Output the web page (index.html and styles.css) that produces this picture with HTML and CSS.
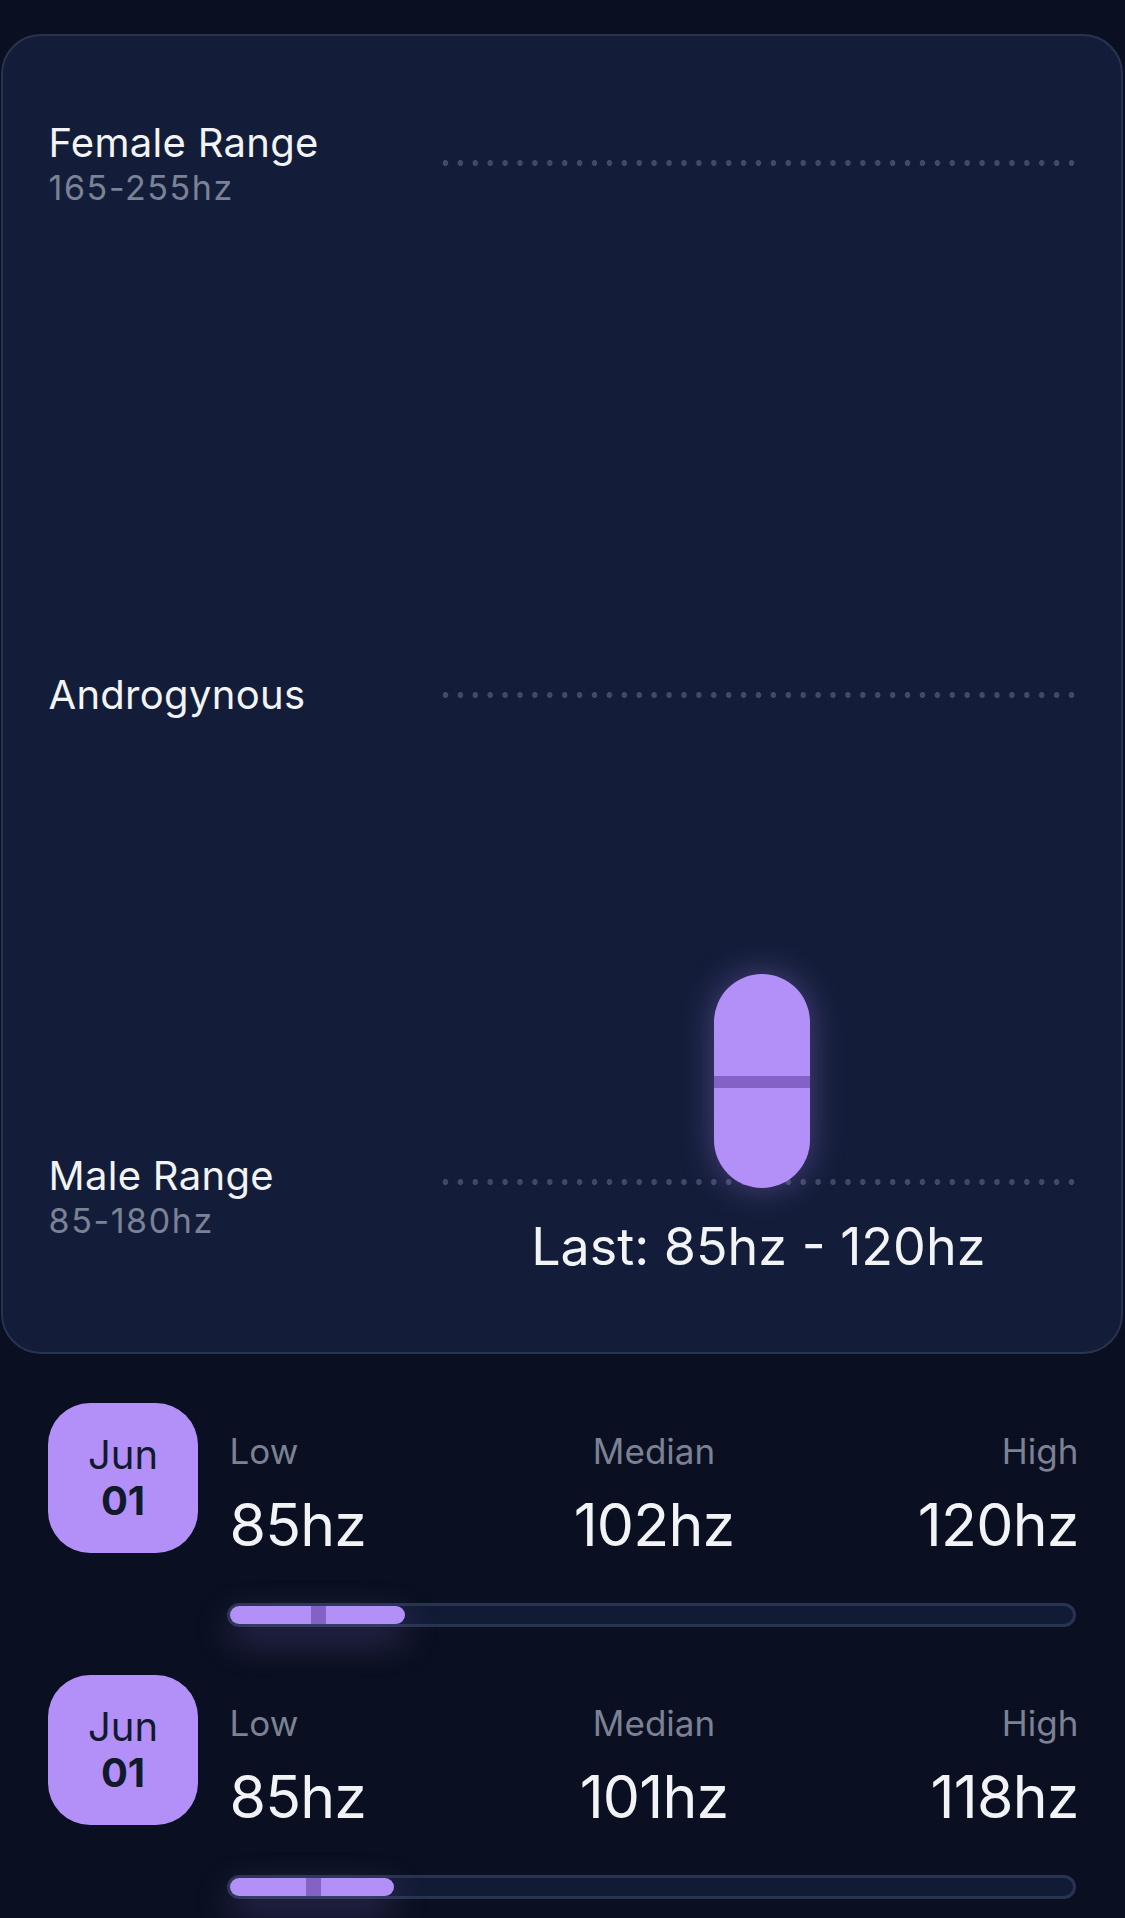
FILE: index.html
```html
<!DOCTYPE html>
<html lang="en">
<head>
  <meta charset="UTF-8">
  <title>Voice Range</title>
  <link rel="stylesheet" href="styles.css">
</head>
<body>
  <div class="card">
    <div class="guide guide-top">
      <div class="guide-label">
        <div class="guide-title">Female Range</div>
        <div class="guide-sub">165-255hz</div>
      </div>
      <div class="dots"></div>
    </div>

    <div class="guide guide-mid">
      <div class="guide-label">
        <div class="guide-title">Androgynous</div>
      </div>
      <div class="dots"></div>
    </div>

    <div class="guide guide-bottom">
      <div class="guide-label">
        <div class="guide-title">Male Range</div>
        <div class="guide-sub">85-180hz</div>
      </div>
      <div class="plot-col">
        <div class="dots"></div>
        <div class="last">Last: 85hz - 120hz</div>
      </div>
    </div>

    <!-- last session: 85hz to 120hz, median 102hz -->
    <div class="pill">
      <div class="pill-median"></div>
    </div>
  </div>

  <div class="entries">
    <div class="entry">
      <div class="entry-head">
        <div class="date">
          <span class="month">Jun</span>
          <span class="day">01</span>
        </div>
        <div class="stats">
          <div class="stat">
            <div class="stat-label">Low</div>
            <div class="stat-value">85hz</div>
          </div>
          <div class="stat stat-mid">
            <div class="stat-label">Median</div>
            <div class="stat-value">102hz</div>
          </div>
          <div class="stat stat-end">
            <div class="stat-label">High</div>
            <div class="stat-value">120hz</div>
          </div>
        </div>
      </div>
      <div class="bar">
        <div class="bar-fill" style="width: 20.8%;">
          <div class="bar-median" style="left: 46%;"></div>
        </div>
      </div>
    </div>

    <div class="entry">
      <div class="entry-head">
        <div class="date">
          <span class="month">Jun</span>
          <span class="day">01</span>
        </div>
        <div class="stats">
          <div class="stat">
            <div class="stat-label">Low</div>
            <div class="stat-value">85hz</div>
          </div>
          <div class="stat stat-mid">
            <div class="stat-label">Median</div>
            <div class="stat-value">101hz</div>
          </div>
          <div class="stat stat-end">
            <div class="stat-label">High</div>
            <div class="stat-value">118hz</div>
          </div>
        </div>
      </div>
      <div class="bar">
        <div class="bar-fill" style="width: 19.5%;">
          <div class="bar-median" style="left: 46%;"></div>
        </div>
      </div>
    </div>
  </div>
</body>
</html>
```

FILE: styles.css
```css
body { margin: 0; background: #0a1021; color: #f2f3f5; font-family: Inter, "Noto Sans", sans-serif; }

.card { position: relative; margin: 34px 0 0 1px; width: 1122px; box-sizing: border-box; padding: 82px 42px 75px 45.5px; background: #131d39; border: 2px solid #27334f; border-radius: 40px; }

.guide { display: flex; align-items: center; }
.guide-mid { margin-top: 462px; }
.guide-bottom { margin-top: 431px; align-items: flex-start; }
.guide-label { width: 389px; flex-shrink: 0; }
.guide-title { font-size: 40px; line-height: 50px; letter-spacing: 0.3px; }
.guide-sub { font-size: 34px; line-height: 40px; letter-spacing: 1.6px; color: #7b8295; }

.dots { flex: 1; height: 6px; background-image: radial-gradient(circle, #3f4a66 2.7px, transparent 3.1px); background-size: calc(100% / 43) 6px; background-repeat: repeat-x; }
.plot-col { flex: 1; display: flex; flex-direction: column; }
.plot-col .dots { flex: none; margin-top: 27.5px; }
.last { margin-top: 32px; text-align: center; font-size: 52px; line-height: 60px; }

.pill { position: absolute; left: 711px; top: 938px; width: 96px; height: 214px; border-radius: 48px; background: #b390f7; box-shadow: 0 0 34px rgba(170, 130, 245, 0.38); overflow: hidden; }
.pill-median { position: absolute; left: 0; right: 0; top: 102px; height: 12px; background: #8461c5; }

.entries { padding: 49px 49px 0 48px; }
.entry { margin-bottom: 48px; }
.entry-head { display: flex; height: 150px; }
.date { width: 150px; height: 150px; flex-shrink: 0; border-radius: 42px; background: #b390f7; color: #111a2d; display: flex; flex-direction: column; align-items: center; justify-content: center; }
.month { font-size: 40px; line-height: 46px; }
.day { font-size: 40px; line-height: 46px; font-weight: 700; }

.stats { flex: 1; margin: 0 -2.5px 0 31.5px; padding-top: 27px; display: grid; grid-template-columns: 1fr 1fr 1fr; align-content: start; }
.stat-mid { text-align: center; }
.stat-end { text-align: right; }
.stat-label { font-size: 35px; line-height: 42px; color: #7c8294; }
.stat-value { margin-top: 18px; font-size: 59px; line-height: 70px; letter-spacing: -0.8px; }

.bar { margin: 50px 0 0 179px; height: 24px; box-sizing: border-box; border: 3px solid #27334f; border-radius: 12px; background: #121b36; }
.bar-fill { position: relative; height: 18px; border-radius: 9px; background: #b390f7; box-shadow: 0 14px 36px rgba(170, 130, 245, 0.34); overflow: hidden; }
.bar-median { position: absolute; top: 0; bottom: 0; width: 15px; background: #8461c5; }
```
